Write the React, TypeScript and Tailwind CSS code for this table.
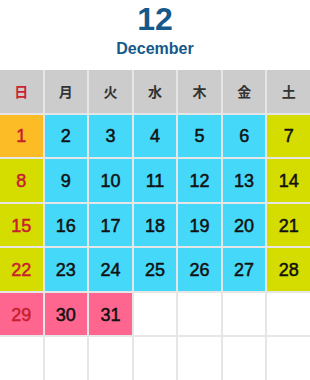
import React from "react";

const heads = [
  { t: "日", red: true },
  { t: "月" },
  { t: "火" },
  { t: "水" },
  { t: "木" },
  { t: "金" },
  { t: "土" },
];

type Cell = { n?: number; bg: string; red?: boolean };

const ORANGE = "bg-[#fbbc26]";
const CYAN = "bg-[#46d8f8]";
const YELLOW = "bg-[#d4dc00]";
const PINK = "bg-[#fe6690]";
const WHITE = "bg-white";

function buildCells(): Cell[] {
  const cells: Cell[] = [];
  for (let d = 1; d <= 28; d++) {
    const col = (d - 1) % 7;
    let bg = CYAN;
    if (d === 1) bg = ORANGE;
    else if (col === 0 || col === 6) bg = YELLOW;
    cells.push({ n: d, bg, red: col === 0 });
  }
  cells.push({ n: 29, bg: PINK, red: true });
  cells.push({ n: 30, bg: PINK });
  cells.push({ n: 31, bg: PINK });
  for (let i = 0; i < 4 + 7; i++) cells.push({ bg: WHITE });
  return cells;
}

export default function App() {
  const cells = buildCells();
  return (
    <div className="w-[310px] h-[380px] overflow-hidden bg-white font-['Liberation_Sans',Arial,sans-serif]">
      <div className="h-[70px] flex flex-col items-center text-[#14598a] font-bold">
        <div className="mt-[3px] text-[32px] leading-none">12</div>
        <div className="mt-[6px] text-[16px] leading-none">December</div>
      </div>
      <div className="grid grid-cols-7 gap-[2px] bg-[#e6e6e6]">
        {heads.map((h) => (
          <div
            key={h.t}
            className={`aspect-square flex items-center justify-center bg-[#cccccc] text-[14px] font-bold font-['Noto_Sans_CJK_JP',sans-serif] ${
              h.red ? "text-[#cc2233]" : "text-[#333333]"
            }`}
          >
            {h.t}
          </div>
        ))}
        {cells.map((c, i) => (
          <div
            key={i}
            className={`aspect-square flex items-center justify-center pt-[2px] text-[18px] [-webkit-text-stroke:0.5px] ${c.bg} ${
              c.red ? "text-[#c8202e]" : "text-[#111111]"
            }`}
          >
            {c.n ?? ""}
          </div>
        ))}
      </div>
    </div>
  );
}
